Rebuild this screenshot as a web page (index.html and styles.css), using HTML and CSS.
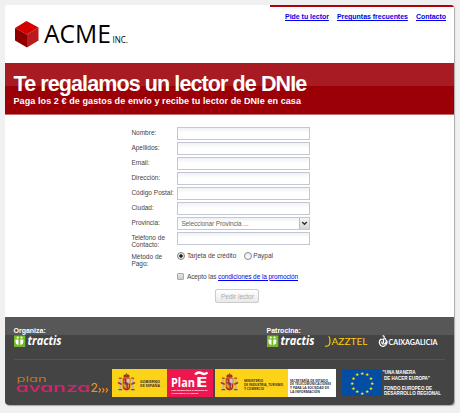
FILE: index.html
```html
<!DOCTYPE html>
<html lang="es">
<head>
<meta charset="utf-8">
<title>ACME Inc.</title>
<link rel="stylesheet" href="styles.css">
</head>
<body>
<svg class="defs" width="0" height="0" aria-hidden="true">
  <symbol id="tractis" viewBox="0 0 50 13">
    <rect x="0" y="0.5" width="11.300" height="11.500" fill="#76b82a"/>
    <path d="M1.500 4.500H4.500V10Q1.500 9.500 1.500 6.500ZM6.300 4.500H9.300V6.500Q9.300 9.500 6.300 10Z" fill="#fff"/>
    <circle cx="3.700" cy="2.500" r="1.100" fill="#fff"/><circle cx="7.500" cy="2.500" r="1.100" fill="#fff"/>
    <text x="13.500" y="10.300" class="tractis-text" textLength="34" lengthAdjust="spacingAndGlyphs">tractis</text>
  </symbol>
  <symbol id="escudo" viewBox="0 0 20 20">
    <path d="M7 4.500Q6 1.500 10 1.300Q14 1.500 13 4.500Z" fill="#a82a25"/>
    <path d="M10 0v3M7 4.500h6" stroke="#8a6415" stroke-width="1"/>
    <rect x="2.500" y="6" width="2" height="11" fill="#bdb5a0"/><rect x="15.500" y="6" width="2" height="11" fill="#bdb5a0"/>
    <path d="M2 5.500h3M15 5.500h3" stroke="#9c6a14" stroke-width="1.600"/>
    <path d="M1 10l4 2M19 10l-4 2" stroke="#b52d25" stroke-width="1.700"/>
    <path d="M1.500 17.500h4M14.500 17.500h4" stroke="#426278" stroke-width="1.500"/>
    <path d="M6 5.500h8v9q0 3-4 4q-4-1-4-4Z" fill="#b32b28"/>
    <path d="M10 6h3.500v5H10Z" fill="#d8c4bd"/><path d="M6.500 11H10v5.500q-3-.5-3.500-3Z" fill="#d49a20"/>
    <circle cx="10" cy="11.200" r="1.500" fill="#554667"/>
    <path d="M7.500 7v3M12 12v3.500" stroke="#dfaa32"/>
  </symbol>
</svg>
<div class="page">
  <header class="header">
    <svg class="logo" width="120" height="34" viewBox="0 0 120 34">
      <path d="M11.500 1L23.500 7.500 12 14.500 0 8Z" fill="#d40000"/>
      <path d="M0 8l12 6.500V27.500L0 20.500Z" fill="#8e0000"/>
      <path d="M23.500 7.500V20.500L12 27.500V14.500Z" fill="#b81c1c"/>
      <text x="29" y="22.500" class="logo-name" textLength="67" lengthAdjust="spacingAndGlyphs">ACME</text>
      <text x="97.500" y="23" class="logo-inc" textLength="15.500" lengthAdjust="spacingAndGlyphs">INC.</text>
    </svg>
    <nav class="nav"><a href="#">Pide tu lector</a><a href="#">Preguntas frecuentes</a><a href="#">Contacto</a></nav>
  </header>
  <section class="banner">
    <h1>Te regalamos un lector de DNIe</h1>
    <p>Paga los 2 € de gastos de envío y recibe tu lector de DNIe en casa</p>
  </section>
  <form class="form">
    <div class="row"><label>Nombre:</label><span class="field"></span></div>
    <div class="row"><label>Apellidos:</label><span class="field"></span></div>
    <div class="row"><label>Email:</label><span class="field"></span></div>
    <div class="row"><label>Dirección:</label><span class="field"></span></div>
    <div class="row"><label>Código Postal:</label><span class="field"></span></div>
    <div class="row"><label>Ciudad:</label><span class="field"></span></div>
    <div class="row"><label>Provincia:</label><span class="field select"><span>Seleccionar Provincia ...</span><i><svg width="7" height="5" viewBox="0 0 7 5"><path d="M1.200 1l2.300 2.300L5.800 1" fill="none" stroke="#333" stroke-width="1.400"/></svg></i></span></div>
    <div class="row phone"><label>Teléfono de<br>Contacto:</label><span class="field"></span></div>
    <div class="row payment"><label>Método de<br>Pago:</label><span class="options"><i class="radio on"></i><span class="card">Tarjeta de crédito</span><i class="radio"></i><span>Paypal</span></span></div>
    <div class="terms"><i class="check"></i><span>Acepto las <a href="#">condiciones de la promoción</a></span></div>
    <button class="submit" type="button">Pedir lector</button>
  </form>
  <footer class="footer">
    <div class="credits">
      <div class="organizer"><h2>Organiza:</h2><svg width="50" height="13"><use href="#tractis"/></svg></div>
      <div class="sponsors"><h2>Patrocina:</h2>
        <div class="brands">
          <svg width="50" height="13"><use href="#tractis"/></svg>
          <svg width="46" height="13" viewBox="0 0 46 13"><path d="M0 11.200q5 .5 5-4.500T3.500 1.500" fill="none" stroke="#fc0" stroke-width="1.200"/><text x="6.500" y="9.500" class="jazztel" textLength="36" lengthAdjust="spacingAndGlyphs">AZZTEL</text></svg>
          <svg width="62" height="13" viewBox="0 0 62 13"><path d="M3.500 1Q6 .500 5 3M2 4Q-.5 6 .7 9t4 2.300T8 8 6 4.500M2 4.500l5-1M4.500 4v4M3 6.500Q2.300 9 4.800 9t2-2.500" fill="none" stroke="#fff" stroke-width="1.200"/><text x="9.500" y="9.800" class="caixa" textLength="49" lengthAdjust="spacingAndGlyphs">CAIXAGALICIA</text></svg>
        </div>
      </div>
    </div>
    <div class="partners">
      <svg class="avanza" width="96" height="20" viewBox="0 0 96 20">
        <text x="0.500" y="6.500" class="plan" textLength="30" lengthAdjust="spacingAndGlyphs">plan</text>
        <text x="-0.500" y="17" class="av" textLength="74.500" lengthAdjust="spacingAndGlyphs">avanza</text>
        <text x="74.500" y="17" class="two" textLength="7.500" lengthAdjust="spacingAndGlyphs">2</text>
        <path d="M83 13l1.500 2-1.500 2.500M86.500 13l1.500 2-1.500 2.500M90 13l1.500 2-1.500 2.500" fill="none" stroke="#f79420" stroke-width="1.200"/>
      </svg>
      <svg class="gob" width="101" height="28" viewBox="0 0 101 28">
        <rect width="55" height="28" fill="#fdd31a"/><rect x="55" width="46" height="28" fill="#ee164f"/>
        <use href="#escudo" x="5" y="4" width="19" height="19"/>
        <g class="tiny"><text x="28" y="13.500" textLength="20" lengthAdjust="spacingAndGlyphs">GOBIERNO</text><text x="28" y="17.500" textLength="20" lengthAdjust="spacingAndGlyphs">DE ESPAÑA</text></g>
        <text x="59" y="18" class="plane" textLength="24" lengthAdjust="spacingAndGlyphs">Plan</text><text x="83.500" y="18" class="big-e" textLength="12" lengthAdjust="spacingAndGlyphs">E</text>
        <path d="M83 5.500q3-3 6.500-1.300t6-.7" fill="none" stroke="#fff" stroke-width="2.400"/>
        <g class="white-tiny"><text x="59.500" y="22" textLength="36" lengthAdjust="spacingAndGlyphs">Plan Español para el Estímulo de</text><text x="59.500" y="25.200" textLength="27" lengthAdjust="spacingAndGlyphs">la Economía y el Empleo</text></g>
      </svg>
      <svg class="min" width="121" height="28" viewBox="0 0 121 28">
        <rect width="73" height="28" fill="#fdd31a"/><rect x="73" width="48" height="28" fill="#fff"/>
        <use href="#escudo" x="5" y="4" width="19" height="19"/>
        <g class="tiny"><text x="29" y="12.500" textLength="19" lengthAdjust="spacingAndGlyphs">MINISTERIO</text><text x="29" y="16.500" textLength="39" lengthAdjust="spacingAndGlyphs">DE INDUSTRIA, TURISMO</text><text x="29" y="20.500" textLength="20" lengthAdjust="spacingAndGlyphs">Y COMERCIO</text>
        <text x="75" y="12.500" textLength="38" lengthAdjust="spacingAndGlyphs">SECRETARÍA DE ESTADO</text><text x="75" y="16.200" textLength="41" lengthAdjust="spacingAndGlyphs">DE TELECOMUNICACIONES</text><text x="75" y="19.900" textLength="39" lengthAdjust="spacingAndGlyphs">Y PARA LA SOCIEDAD DE</text><text x="75" y="23.600" textLength="30" lengthAdjust="spacingAndGlyphs">LA INFORMACIÓN</text></g>
      </svg>
      <svg class="eu" width="102" height="28" viewBox="0 0 102 28">
        <rect width="40" height="27" fill="#034ea2"/>
        <g class="stars"><text x="20" y="6">★</text><text x="25" y="7.300">★</text><text x="28.700" y="11">★</text><text x="30" y="16">★</text><text x="28.700" y="20.800">★</text><text x="25" y="24.300">★</text><text x="20" y="25.500">★</text><text x="15" y="24.300">★</text><text x="11.300" y="20.800">★</text><text x="10" y="16">★</text><text x="11.300" y="11">★</text><text x="15" y="7.300">★</text></g>
        <g class="eu-text"><text x="40.500" y="5" textLength="33" lengthAdjust="spacingAndGlyphs">"UNA MANERA</text><text x="42" y="10.500" textLength="46" lengthAdjust="spacingAndGlyphs">DE HACER EUROPA"</text><text x="42" y="21" textLength="48" lengthAdjust="spacingAndGlyphs">FONDO EUROPEO DE</text><text x="42" y="26.300" textLength="57" lengthAdjust="spacingAndGlyphs">DESARROLLO REGIONAL</text></g>
      </svg>
    </div>
  </footer>
</div>
</body>
</html>
```
FILE: styles.css
```css
* { box-sizing: border-box; }
body { margin: 0; padding: 5px; background: #f0f0f0; font-family: "Liberation Sans", Arial, sans-serif; overflow: hidden; }
h1, h2, p { margin: 0; }
a { color: #0000ee; }
svg { overflow: visible; }
.defs { display: none; }
.page { width: 449px; height: 400px; background: #fff; border-radius: 3px 3px 4px 4px; box-shadow: 1px 1px 1px #aaa; overflow: hidden; }
.header { display: flex; justify-content: space-between; height: 58px; }
.logo { margin: 15px 0 0 10px; }
.logo-name { font: 26px "Open Sans", sans-serif; }
.logo-inc { font: 8.500px "Open Sans", sans-serif; }
.nav { display: flex; gap: 8px; width: 184px; height: 20px; padding: 6px 0 0 15px; border-top: 2px solid #b00008; font-size: 7px; font-weight: bold; line-height: 8px; letter-spacing: -0.030px; white-space: nowrap; }
.banner { height: 52px; padding: 9px 9px 0 8.500px; color: #fff; background: linear-gradient(#a91b22 0 23px, #9b0007 23px 51px, #c86a6e 51px); white-space: nowrap; }
.banner h1 { font-size: 21.500px; line-height: 24px; letter-spacing: -0.900px; }
.banner p { font-size: 9px; line-height: 10px; letter-spacing: 0.090px; font-weight: bold; }
.form { display: flex; flex-direction: column; height: 202px; padding: 12px 0 0 126.400px; font-size: 6.500px; line-height: 7px; color: #444; }
.row { display: flex; height: 15px; }
.row label { width: 46px; padding-top: 2px; white-space: nowrap; }
.field { width: 133px; height: 13px; border: 1px solid #c3c6d5; background: linear-gradient(#f0f1f3, #fff 5px); }
.select { display: flex; justify-content: space-between; align-items: center; padding-left: 3px; color: #666; letter-spacing: -0.110px; }
.select i { display: flex; align-items: center; justify-content: center; width: 10px; height: 11px; border-left: 1px solid #bbb; background: linear-gradient(#f5f5f5, #d5d5d5); }
.phone { height: 19px; }
.payment { height: 18px; }
.options { display: flex; align-items: flex-start; padding-top: 1px; letter-spacing: -0.030px; }
.radio { width: 8px; height: 8px; margin-right: 1.500px; border: 1px solid #888; border-radius: 50%; background: linear-gradient(#eee, #fff); }
.radio.on { background: radial-gradient(circle, #222 0 1.400px, #e5e5e5 2px); }
.card { margin-right: 7.500px; }
.terms { display: flex; align-items: center; height: 14px; margin-left: 46px; letter-spacing: -0.090px; }
.check { width: 7px; height: 7px; margin-right: 2.500px; border: 1px solid #aaa; border-radius: 1px; background: linear-gradient(#e5e5e5, #ccc); }
.submit { width: 44px; height: 14px; margin: 6px 0 0 84px; padding: 0; border: 1px solid #ccc; border-radius: 2px; background: linear-gradient(#fff, #e9e9e9); color: #aaa; font: 6.500px "Liberation Sans", sans-serif; }
.footer { height: 88px; padding: 8.500px 9px 0 8.500px; background: linear-gradient(#575757 0 18px, #444 18px); color: #fff; }
.credits { display: flex; height: 34.500px; border-bottom: 1px solid #555; }
.credits svg { display: block; }
.organizer { width: 253px; }
.footer h2 { font-size: 7px; line-height: 9px; }
.brands { display: flex; gap: 8px; }
.tractis-text { font: italic bold 12px "Open Sans", sans-serif; fill: #fff; }
.jazztel { font: 9.500px Lato, sans-serif; fill: #fc0; }
.caixa { font: bold 8px Lato, sans-serif; fill: #fff; }
.partners { display: flex; margin-top: 9px; }
.avanza { margin: 6px 0 0 2.500px; }
.plan { font: 8px Inter, sans-serif; font-feature-settings: "cv11"; fill: #b9772f; }
.av { font: 500 12.500px Inter, sans-serif; font-feature-settings: "cv11"; fill: #d3236d; }
.two { font: 12px Inter, sans-serif; fill: #f79420; }
.gob { margin-right: 1px; }
.min { margin: 0 6px 0 1px; }
.tiny { font: bold 3.600px "Open Sans", sans-serif; fill: #333; }
.white-tiny { font: bold 2.300px "Open Sans", sans-serif; fill: #fff; }
.plane { font: bold 13px "Open Sans", sans-serif; fill: #fff; }
.big-e { font: bold 14px "Open Sans", sans-serif; fill: #fff; }
.stars { font: 4.500px "DejaVu Sans", sans-serif; fill: #ffe800; text-anchor: middle; }
.eu-text { font: bold 4.800px "Liberation Sans", sans-serif; fill: #fff; }
```
